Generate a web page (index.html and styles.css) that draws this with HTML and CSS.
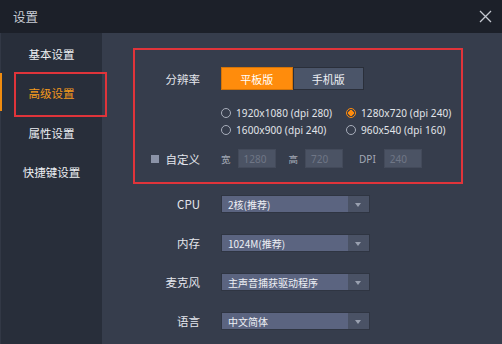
FILE: index.html
```html
<!DOCTYPE html>
<html lang="zh">
<head>
<meta charset="utf-8">
<link rel="stylesheet" href="styles.css">
</head>
<body>
<div class="window">
  <div class="titlebar">
    <span class="title">设置</span>
    <svg class="close" width="13" height="13" viewBox="0 0 13 13"><path d="M1 1 L12 12 M12 1 L1 12" stroke="#c4c8d0" stroke-width="1.3" fill="none"/></svg>
  </div>
  <div class="main">
    <div class="sidebar">
      <div class="nav-item">基本设置</div>
      <div class="nav-item active">高级设置<span class="mark"></span></div>
      <div class="nav-item">属性设置</div>
      <div class="nav-item">快捷键设置</div>
    </div>
    <div class="content">
      <div class="res-box">
        <div class="row seg-row">
          <span class="label">分辨率</span>
          <div class="seg">
            <span class="seg-btn on">平板版</span>
            <span class="seg-btn">手机版</span>
          </div>
        </div>
        <div class="radios">
          <label class="radio"><span class="dot"></span>1920x1080 (dpi 280)</label>
          <label class="radio sel"><span class="dot"></span>1280x720 (dpi 240)</label>
          <label class="radio"><span class="dot"></span>1600x900 (dpi 240)</label>
          <label class="radio"><span class="dot"></span>960x540 (dpi 160)</label>
        </div>
        <div class="row custom-row">
          <span class="label"><span class="check"></span>自定义</span>
          <div class="fields">
            <span class="flabel">宽</span><span class="input">1280</span>
            <span class="flabel gap1">高</span><span class="input">720</span>
            <span class="flabel gap2">DPI</span><span class="input">240</span>
          </div>
        </div>
      </div>
      <div class="selects">
        <div class="row sel-row"><span class="label">CPU</span><div class="select"><span class="val">2核(推荐)</span><span class="arrow"></span></div></div>
        <div class="row sel-row"><span class="label">内存</span><div class="select"><span class="val">1024M(推荐)</span><span class="arrow"></span></div></div>
        <div class="row sel-row"><span class="label">麦克风</span><div class="select"><span class="val">主声音捕获驱动程序</span><span class="arrow"></span></div></div>
        <div class="row sel-row"><span class="label">语言</span><div class="select"><span class="val">中文简体</span><span class="arrow"></span></div></div>
      </div>
    </div>
  </div>
</div>
</body>
</html>
```
FILE: styles.css
```css
* { box-sizing: border-box; }
html, body { margin: 0; padding: 0; }
body {
  width: 502px;
  height: 344px;
  overflow: hidden;
  background: #363d4c;
  font-family: "Noto Sans", "Noto Sans CJK SC", sans-serif;
  color: #e6e8ee;
}
.window { display: flex; flex-direction: column; width: 502px; height: 344px; }
.titlebar {
  height: 33px;
  background: #1c2029;
  display: flex;
  align-items: center;
  justify-content: space-between;
  padding: 0 10px 0 13px;
  flex: none;
}
.title { font-family: "Noto Sans CJK SC", sans-serif; font-size: 12.5px; color: #c9cdd5; }
.close { display: block; }
.main { display: flex; flex: 1; }
.sidebar {
  width: 102px;
  flex: none;
  background: #282e3a;
  border-left: 1px solid #323845;
  padding-top: 1px;
}
.nav-item {
  position: relative;
  height: 39.5px;
  display: flex;
  align-items: center;
  justify-content: center;
  font-family: "Noto Sans CJK SC", sans-serif;
  font-size: 11.5px;
  color: #eceef2;
}
.nav-item.active { color: #f49a1c; }
.nav-item.active::before {
  content: "";
  position: absolute;
  left: -1px;
  top: -1px;
  width: 2px;
  height: 38px;
  background: #f08c10;
}
.mark {
  position: absolute;
  left: 13px;
  top: -2px;
  width: 93px;
  height: 45px;
  border: 2px solid #e0343a;
}
.content { flex: 1; padding: 15px 0 0 31px; }
.res-box {
  width: 330px;
  height: 136px;
  border: 2px solid #e0343a;
  padding-top: 17px;
}
.row { display: flex; align-items: center; }
.label {
  width: 65px;
  margin-right: 21px;
  text-align: right;
  font-family: "Noto Sans CJK SC", sans-serif;
  font-size: 11.5px;
  color: #e4e6ec;
  display: flex;
  align-items: center;
  justify-content: flex-end;
  flex: none;
}
.seg-row { height: 23px; }
.seg { display: flex; height: 23px; width: 143px; }
.seg-btn {
  flex: 1;
  display: flex;
  align-items: center;
  justify-content: center;
  font-family: "Noto Sans CJK SC", sans-serif;
  font-size: 11px;
  background: #4b5569;
  border: 1px solid #2a2f3a;
  color: #eef0f4;
}
.seg-btn.on { background: #ff8c0c; border-color: #d47408; color: #fff; }
.radios {
  margin: 14px 0 0 86px;
  display: grid;
  grid-template-columns: 125px auto;
  grid-auto-rows: 17px;
}
.radio {
  display: flex;
  align-items: center;
  font-size: 10px;
  letter-spacing: 0.1px;
  color: #e2e5ea;
  white-space: nowrap;
}
.dot {
  width: 10px;
  height: 10px;
  border: 1px solid #a8aebb;
  border-radius: 50%;
  margin-right: 5px;
  flex: none;
}
.radio.sel .dot {
  border-color: #ff8c0c;
  background: radial-gradient(circle, #ff8c0c 0 2.6px, #363d4c 3px);
}
.custom-row { margin-top: 11px; height: 19px; }
.check {
  width: 8px;
  height: 8px;
  background: #8b93a7;
  margin-right: 7px;
}
.fields { display: flex; align-items: center; }
.flabel { font-family: "Noto Sans CJK SC", sans-serif; font-size: 9.5px; color: #a3a9b6; margin-right: 7px; }
.flabel.gap1 { margin-left: 13px; margin-right: 7px; }
.flabel.gap2 { margin-left: 16px; margin-right: 8px; font-family: "Noto Sans", sans-serif; font-size: 10px; }
.input {
  width: 38px;
  height: 19px;
  background: #4b5364;
  border: 1px solid #434a5a;
  font-size: 10px;
  color: #6f7686;
  display: flex;
  align-items: center;
  padding-left: 5px;
}
.selects { padding-left: 2px; margin-top: 11px; display: flex; flex-direction: column; gap: 21px; }
.sel-row { height: 18px; }
.select {
  width: 149px;
  height: 18px;
  display: flex;
  background: #5b6480;
  border: 1px solid #2f3542;
}
.val {
  flex: 1;
  font-family: "Noto Sans CJK SC", sans-serif;
  font-size: 10px;
  color: #eef0f5;
  display: flex;
  align-items: center;
  padding-left: 6px;
}
.arrow {
  width: 21px;
  background: #4a5265;
  position: relative;
}
.arrow::after {
  content: "";
  position: absolute;
  left: 7px;
  top: 7px;
  border-left: 3.5px solid transparent;
  border-right: 3.5px solid transparent;
  border-top: 4px solid #9aa1b0;
}
```
